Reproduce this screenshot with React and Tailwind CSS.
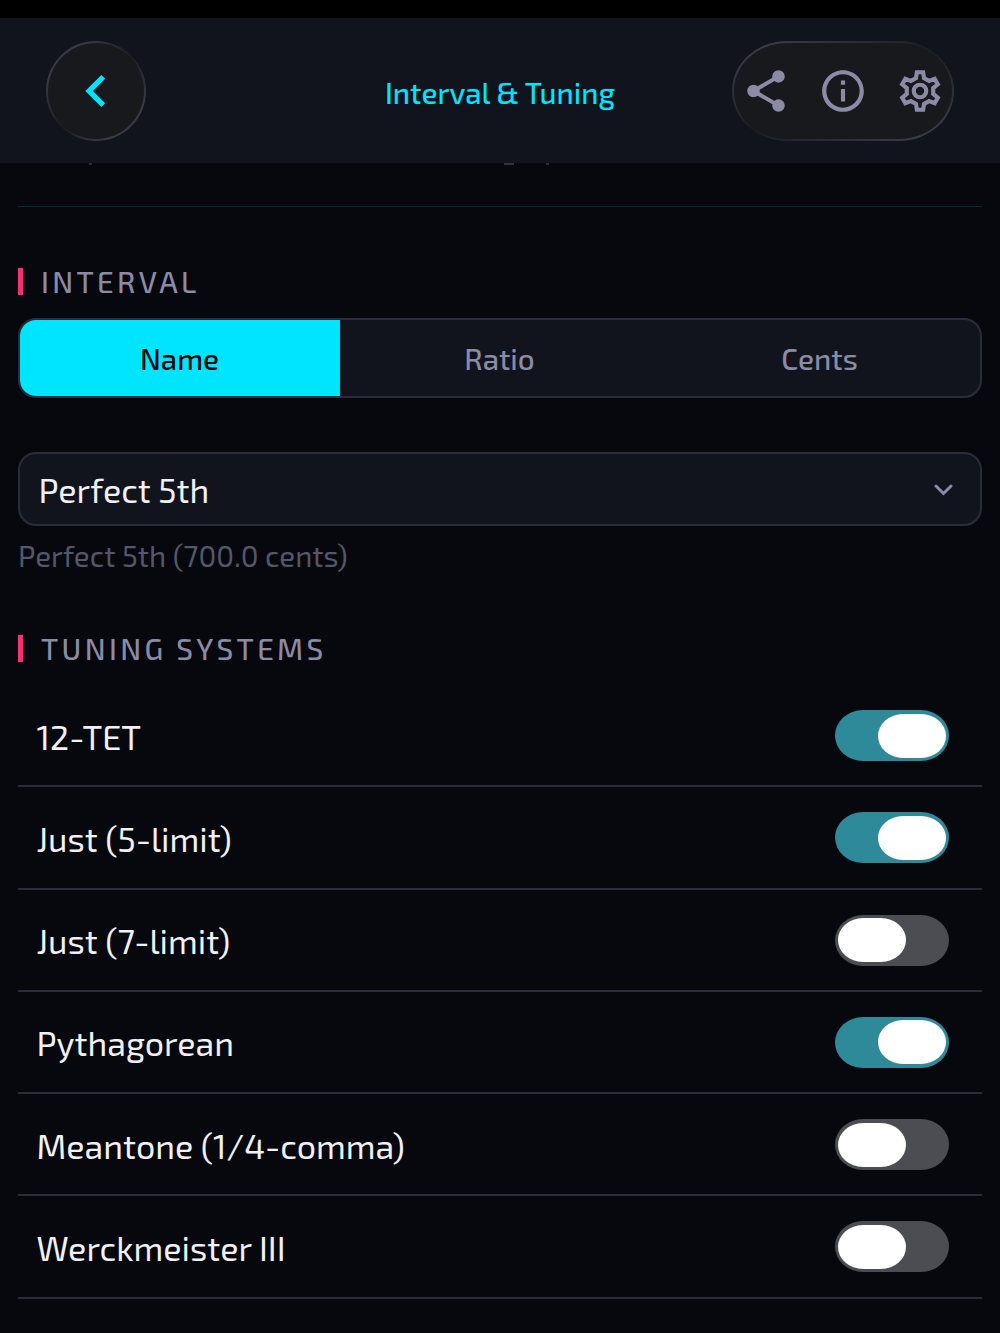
import React, { useState } from "react";
import { MdChevronLeft, MdInfoOutline } from "react-icons/md";

const systems = [
  { id: "12tet", label: "12-TET", on: true },
  { id: "just5", label: "Just (5-limit)", on: true },
  { id: "just7", label: "Just (7-limit)", on: false },
  { id: "pyth", label: "Pythagorean", on: true },
  { id: "mean", label: "Meantone (1/4-comma)", on: false },
  { id: "werck", label: "Werckmeister III", on: false },
];

const tabs = ["Name", "Ratio", "Cents"];

const ShareIcon = ({ className }) => (
  <svg className={className} viewBox="0 0 24 24" fill="currentColor">
    <path d="M18 5L6 12L18 19" fill="none" stroke="currentColor" strokeWidth="1.9" />
    <circle cx="18" cy="5" r="3" />
    <circle cx="6" cy="12" r="3" />
    <circle cx="18" cy="19" r="3" />
  </svg>
);

const GearIcon = ({ className }) => (
  <svg className={className} viewBox="0 0 24 24" fill="none" stroke="currentColor" strokeWidth="2">
    <path d="M13.5 3L13.95 5.8L16.39 7.21L19.04 6.2L20.54 8.8L18.34 10.59V13.41L20.54 15.2L19.04 17.8L16.39 16.79L13.95 18.2L13.5 21H10.5L10.05 18.2L7.61 16.79L4.96 17.8L3.46 15.2L5.66 13.41V10.59L3.46 8.8L4.96 6.2L7.61 7.21L10.05 5.8L10.5 3Z" />
    <circle cx="12" cy="12" r="3" />
  </svg>
);

const SectionTitle = ({ children }) => (
  <div className="flex h-[28px] items-center">
    <span className="h-[27px] w-[5px] bg-[#ff2d75]" />
    <h2 className="ml-[18px] pt-[2px] text-[29.5px] leading-[28px] font-medium tracking-[3.35px] text-[#8b8ba5]">
      {children}
    </h2>
  </div>
);

const Toggle = ({ on, onClick }) => (
  <button
    role="switch"
    aria-checked={on}
    onClick={onClick}
    className={`mt-px flex h-[51px] w-[114px] items-center rounded-[28px/25.5px] px-[3px] ${
      on ? "justify-end bg-[#2e8999]" : "justify-start bg-[#4c4d52]"
    }`}
  >
    <span className="h-[44px] w-[68px] rounded-[25px/22px] bg-white" />
  </button>
);

const App = () => {
  const [tab, setTab] = useState("Name");
  const [enabled, setEnabled] = useState(systems.filter((s) => s.on).map((s) => s.id));

  const toggle = (id) => {
    setEnabled(enabled.includes(id) ? enabled.filter((e) => e !== id) : [...enabled, id]);
  };

  return (
    <div className="h-[1333px] overflow-hidden bg-[#06080d] font-['Exo_2','Open_Sans',sans-serif]">
      <div className="h-[18px] bg-black" />
      <header className="flex h-[145px] items-start justify-between bg-[#11141c] pt-[23px] pr-[45.5px] pl-[45.5px]">
        <div className="w-[222px]">
          <div className="size-[100px] rounded-full bg-[linear-gradient(135deg,#3a3a48_20%,#1b1c22_50%,#3a3a48_80%)] p-[2px]">
            <button className="flex size-full items-center justify-center rounded-full bg-[#18191d] text-[#00e5ff]">
              <MdChevronLeft className="size-[64px]" />
            </button>
          </div>
        </div>
        <h1 className="pt-[34px] text-[29.5px] leading-[36px] font-medium text-[#00e5ff]">
          Interval &amp; Tuning
        </h1>
        <div className="h-[100px] w-[222px] rounded-[55px/50px] bg-[linear-gradient(to_bottom_right,#3a3a48_10%,#1b1c22_50%,#3a3a48_90%)] p-[2px]">
          <div className="flex size-full items-center justify-between rounded-[53px/48px] bg-[#18191d] px-[7px] text-[#8b8ba5]">
            <ShareIcon className="size-[50px]" />
            <MdInfoOutline className="size-[50px]" />
            <GearIcon className="size-[50px]" />
          </div>
        </div>
      </header>

      <main className="px-[18px]">
        {/* descenders of the line scrolled under the header */}
        <div className="flex h-[43px] items-start">
          <span className="ml-[71px] h-[2px] w-[3px] bg-[#2b2c35]" />
          <span className="ml-[412px] h-[2px] w-[10px] bg-[#33343c]" />
          <span className="ml-[32px] h-[2px] w-[3px] bg-[#2b2c35]" />
        </div>
        <div className="h-px bg-[#052b33]" />

        <section className="pt-[60px]">
          <SectionTitle>INTERVAL</SectionTitle>
          <div className="mt-[23px] grid h-[80px] grid-cols-3 overflow-hidden rounded-[18px] border-2 border-[#2a2c3a] bg-[#11141c]">
            {tabs.map((name) => (
              <button
                key={name}
                onClick={() => setTab(name)}
                className={`pt-[2px] pr-px text-[29.5px] font-medium ${
                  tab === name ? "bg-[#00e5ff] text-[#06080d]" : "text-[#8b8ba5]"
                }`}
              >
                {name}
              </button>
            ))}
          </div>

          <button className="mt-[54px] flex h-[74px] w-full items-center justify-between rounded-[18px] border-2 border-[#2a2c3a] bg-[#11141c] pr-[27px] pl-[18.5px] text-[#f0f0f5]">
            <span className="text-[34px]">Perfect 5th</span>
            <svg className="mt-px h-[12px] w-[19px]" viewBox="0 0 19 12" fill="none">
              <path d="M2 2L9.5 9.5L17 2" stroke="#8b8ba5" strokeWidth="3" strokeLinecap="round" />
            </svg>
          </button>
          <p className="mt-[12px] h-[36px] text-[29.5px] leading-[36px] text-[#555669]">
            Perfect 5th (700.0 cents)
          </p>
        </section>

        <section className="pt-[60px]">
          <SectionTitle>TUNING SYSTEMS</SectionTitle>
          <ul className="mt-[23px]">
            {systems.map((s) => (
              <li
                key={s.id}
                className="flex h-[102.25px] items-center justify-between border-b-2 border-[#2a2c3a] pr-[33px] pl-[18.5px]"
              >
                <span className="pt-[1.75px] text-[34px] text-[#f0f0f5]">{s.label}</span>
                <Toggle on={enabled.includes(s.id)} onClick={() => toggle(s.id)} />
              </li>
            ))}
          </ul>
        </section>
      </main>
    </div>
  );
};

export default App;
